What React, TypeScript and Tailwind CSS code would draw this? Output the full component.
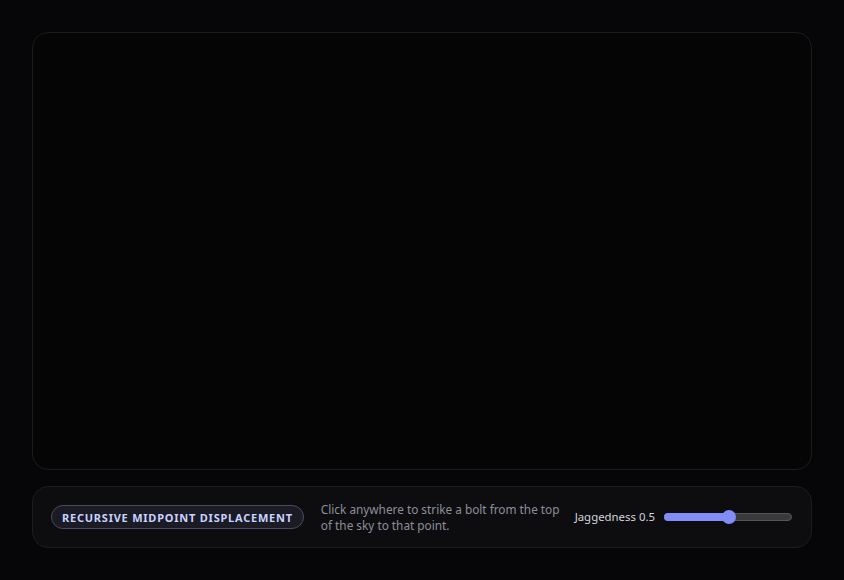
import React from "react";

export default function App() {
  const value = 0.5;
  return (
    <div
      className="w-[844px] h-[580px] bg-[#060608] p-8 flex flex-col gap-4"
      style={{ fontFamily: '"Noto Sans", "Open Sans", sans-serif' }}
    >
      <div className="h-[438px] w-full rounded-2xl border border-[#1c1c20] bg-[#050505]" />
      <div className="h-[62px] w-full rounded-2xl border border-[#1c1c20] bg-[#0d0d10] flex items-center px-[18px]">
        <div className="shrink-0 h-6 px-[10px] rounded-full border border-[#4b4b5e] bg-[#1b1b26] flex items-center">
          <span className="whitespace-nowrap text-[11px] font-bold tracking-[0.07em] text-[#c9d3ff] uppercase leading-none">
            Recursive Midpoint Displacement
          </span>
        </div>
        <p className="ml-[17px] w-[246px] shrink-0 text-[11.8px] leading-4 text-[#8e8e99]">
          Click anywhere to strike a bolt from the top of the sky to that point.
        </p>
        <div className="ml-auto shrink-0 flex items-center gap-[9px] mr-[1px]">
          <span className="whitespace-nowrap text-[11.4px] text-[#d4d4dc]">Jaggedness {value.toFixed(1)}</span>
          <div className="relative w-[128px] h-[8px] rounded-full bg-[#3a3a3c] border border-[#555558]">
            <div className="absolute left-[-1px] top-[-1px] h-[8px] w-[66px] rounded-full bg-[#818cf8]" />
            <div className="absolute left-[57px] top-[-4px] w-[14px] h-[14px] rounded-full bg-[#818cf8]" />
          </div>
        </div>
      </div>
    </div>
  );
}
